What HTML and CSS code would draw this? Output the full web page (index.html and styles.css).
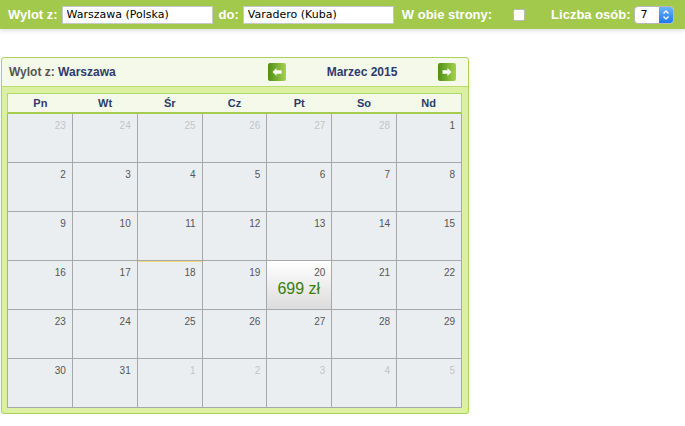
FILE: index.html
```html
<!DOCTYPE html>
<html lang="pl">
<head>
    <meta charset="UTF-8">
    <title>Kalendarz lotów</title>
    <link rel="stylesheet" href="styles.css">
</head>
<body>
    <div class="topbar">
        <span class="label">Wylot z:</span>
        <input class="field" type="text" value="Warszawa (Polska)">
        <span class="label">do:</span>
        <input class="field" type="text" value="Varadero (Kuba)">
        <span class="label both">W obie strony:</span>
        <span class="check"></span>
        <span class="label persons">Liczba osób:</span>
        <span class="select">
            <span class="select-value">7</span>
            <span class="select-arrow">
                <svg width="8" height="12" viewBox="0 0 8 12"><path d="M1.5 4.5 L4 2 L6.5 4.5 M1.5 7.5 L4 10 L6.5 7.5" fill="none" stroke="#fff" stroke-width="1.3"/></svg>
            </span>
        </span>
    </div>

    <div class="widget">
        <div class="widget-head">
            <div class="from">Wylot z: <b>Warszawa</b></div>
            <div class="month-nav">
                <span class="nav-btn">
                    <svg width="10" height="10" viewBox="0 0 10 10"><path d="M0.5 5 L4.5 1 L4.5 3.2 L9.5 3.2 L9.5 6.8 L4.5 6.8 L4.5 9 Z" fill="#fff"/></svg>
                </span>
                <span class="month">Marzec 2015</span>
                <span class="nav-btn">
                    <svg width="10" height="10" viewBox="0 0 10 10"><path d="M9.5 5 L5.5 1 L5.5 3.2 L0.5 3.2 L0.5 6.8 L5.5 6.8 L5.5 9 Z" fill="#fff"/></svg>
                </span>
            </div>
        </div>
        <div class="widget-body">
            <div class="days">
                <div>Pn</div><div>Wt</div><div>Śr</div><div>Cz</div><div>Pt</div><div>So</div><div>Nd</div>
            </div>
            <div class="grid" id="grid"></div>
        </div>
    </div>

    <script>
        const days = [];
        [23, 24, 25, 26, 27, 28].forEach(d => days.push({ n: d, other: true }));
        for (let d = 1; d <= 31; d++) days.push({ n: d });
        [1, 2, 3, 4, 5].forEach(d => days.push({ n: d, other: true }));

        let html = "";
        days.forEach(day => {
            let cls = "cell";
            if (day.other) cls += " other";
            if (!day.other && day.n === 18) cls += " today";
            if (!day.other && day.n === 20) cls += " price";
            html += `<div class="${cls}"><span class="num">${day.n}</span>`;
            if (!day.other && day.n === 20) html += `<span class="amount">699 zł</span>`;
            html += `</div>`;
        });
        document.getElementById('grid').innerHTML = html;
    </script>
</body>
</html>
```

FILE: styles.css
```css
body {
    margin: 0;
    font-family: "Liberation Sans", Arial, sans-serif;
    background-color: #fff;
}
.topbar {
    height: 29px;
    background-color: #a3c94c;
    display: flex;
    align-items: center;
    padding-left: 8px;
    box-shadow: 0 2px 4px rgba(0, 0, 0, 0.12);
}
.label {
    color: #fff;
    font-weight: bold;
    font-size: 13px;
    margin-right: 4px;
}
.field {
    width: 151px;
    height: 18px;
    box-sizing: border-box;
    border: 1px solid #c8c8c8;
    padding: 0 4px;
    font-family: "DejaVu Sans", Verdana, sans-serif;
    font-size: 11px;
    color: #000;
    margin-right: 6px;
}
.both {
    margin-left: 2px;
}
.check {
    width: 10px;
    height: 10px;
    background: #fff;
    border: 1px solid #bbb;
    border-radius: 2px;
    margin-left: 17px;
}
.persons {
    margin-left: 26px;
    margin-right: 3px;
}
.select {
    display: flex;
    width: 40px;
    height: 18px;
    box-sizing: border-box;
    border: 1px solid #b8b8b8;
    border-radius: 4px;
    background: #fff;
    overflow: hidden;
}
.select-value {
    flex: 1;
    font-family: "DejaVu Sans", Verdana, sans-serif;
    font-size: 11px;
    line-height: 16px;
    padding-left: 6px;
}
.select-arrow {
    width: 14px;
    background: linear-gradient(#6cb3fa, #1a78f0);
    display: flex;
    align-items: center;
    justify-content: center;
}
.widget {
    width: 466px;
    margin-top: 28px;
    margin-left: 1px;
    border: 1px solid #acd25c;
    border-radius: 3px;
    background-color: #dcf0a2;
    box-shadow: 0 8px 8px -4px rgba(0, 0, 0, 0.22);
}
.widget-head {
    height: 28px;
    background-color: #f4f9e9;
    border-bottom: 1px solid #b9dc6c;
    border-radius: 3px 3px 0 0;
    display: flex;
    align-items: center;
    font-size: 12px;
    font-weight: bold;
}
.from {
    color: #555;
    width: 259px;
    padding-left: 7px;
}
.from b {
    color: #2d3b6e;
}
.month-nav {
    display: flex;
    align-items: center;
}
.month {
    width: 152px;
    text-align: center;
    color: #2d3b6e;
}
.nav-btn {
    width: 18px;
    height: 18px;
    border-radius: 2px;
    background: linear-gradient(to right, #4f8f16, #a6d24e);
    display: flex;
    align-items: center;
    justify-content: center;
}
.widget-body {
    padding: 6px 6px 5px 5px;
}
.days {
    display: grid;
    grid-template-columns: repeat(7, 1fr);
    background-color: #f4f9e9;
    border: 1px solid #b2d865;
    border-bottom: 2px solid #a3cc50;
    height: 18px;
}
.days div {
    text-align: center;
    font-size: 11px;
    font-weight: bold;
    color: #2d3b6e;
    line-height: 18px;
}
.grid {
    display: grid;
    grid-template-columns: repeat(7, 1fr);
    grid-auto-rows: 48px;
    gap: 1px;
    background-color: #a8a8a8;
    border: 1px solid #a8a8a8;
    border-top: none;
}
.cell {
    background-color: #ebeef1;
    display: flex;
    flex-direction: column;
    align-items: flex-end;
    padding: 6px 6px 0 0;
    box-sizing: border-box;
}
.num {
    font-size: 10px;
    color: #555;
}
.other .num {
    color: #c4c4c4;
}
.today {
    border-top: 1px solid #f2dc78;
    padding-top: 5px;
}
.price {
    background: linear-gradient(#fff, #dcdcdc);
}
.amount {
    align-self: flex-start;
    margin: 2px 0 0 10px;
    font-size: 16px;
    color: #3a7d12;
}
```
